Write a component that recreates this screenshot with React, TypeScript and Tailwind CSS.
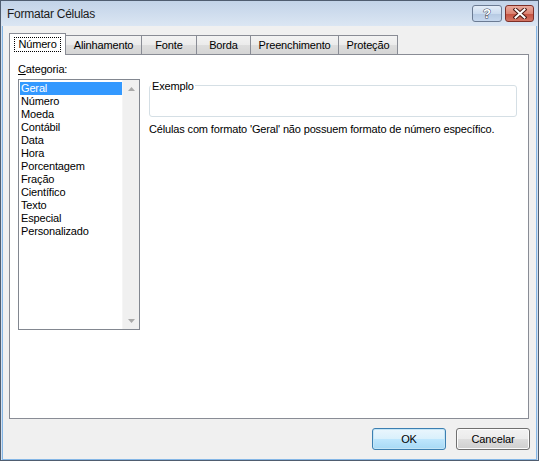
const CATEGORIES = [
  "Geral",
  "Número",
  "Moeda",
  "Contábil",
  "Data",
  "Hora",
  "Porcentagem",
  "Fração",
  "Científico",
  "Texto",
  "Especial",
  "Personalizado",
];

const TABS = [
  { label: "Alinhamento", width: "w-[77px]" },
  { label: "Fonte", width: "w-[56px]" },
  { label: "Borda", width: "w-[55px]" },
  { label: "Preenchimento", width: "w-[89px]" },
  { label: "Proteção", width: "w-[60px]" },
];

function TitleBar() {
  return (
    <div className="flex h-[25px] items-start justify-between bg-[linear-gradient(#c2d3e8,#dbe6f3)] pl-[6px] pr-[4px]">
      <span className="pt-[6px] text-[12px] leading-[14px] tracking-[-0.25px] text-[#1b1b1b]">Formatar Células</span>
      <div className="flex gap-[3px] pt-[4px]">
        <button className="flex h-[17px] w-[30px] items-center justify-center rounded-[3px] border border-[#6b7b93] bg-[linear-gradient(#e4edf8_0%,#ccdcef_50%,#b5c9e2_51%,#c7d8ee_100%)]">
          <svg width="12" height="13" viewBox="0 0 12 13">
            <text
              x="6"
              y="11"
              textAnchor="middle"
              fontFamily="Liberation Sans, sans-serif"
              fontWeight="bold"
              fontSize="13"
              fill="#ffffff"
              stroke="#3f4a5c"
              strokeWidth="1"
              paintOrder="stroke"
            >
              ?
            </text>
          </svg>
        </button>
        <button className="flex h-[17px] w-[29px] items-center justify-center rounded-[3px] border border-[#7e2f27] bg-[linear-gradient(#e9aa9c_0%,#dc8473_50%,#c4503e_51%,#d27565_100%)]">
          <svg width="14" height="11" viewBox="0 0 14 11">
            <path
              d="M2.5 1.5 L11.5 9.5 M11.5 1.5 L2.5 9.5"
              stroke="#4a1a14"
              strokeWidth="4"
              strokeLinecap="square"
            />
            <path
              d="M2.5 1.5 L11.5 9.5 M11.5 1.5 L2.5 9.5"
              stroke="#ffffff"
              strokeWidth="2"
              strokeLinecap="square"
            />
          </svg>
        </button>
      </div>
    </div>
  );
}

function ScrollArrow({ down }: { down?: boolean }) {
  return (
    <svg width="7" height="4" viewBox="0 0 7 4">
      <path d={down ? "M0 0 H7 L3.5 4 Z" : "M0 4 H7 L3.5 0 Z"} fill="#a9a9a9" />
    </svg>
  );
}

function CategoryList() {
  return (
    <div className="flex h-[251px] w-[122px] border border-[#828790] bg-white">
      <ul className="flex-1 pl-[1px] pt-[2px]">
        {CATEGORIES.map((c, i) => (
          <li
            key={c}
            className={
              i === 0
                ? "h-[13px] bg-[#3399ff] pl-[1px] leading-[13px] text-white"
                : "h-[13px] pl-[1px] leading-[13px] text-[#000]"
            }
          >
            {c}
          </li>
        ))}
      </ul>
      <div className="flex w-[17px] flex-col items-center justify-between border-l border-[#f5f5f5] bg-[#f0f0f0] pb-[6px] pt-[7px]">
        <ScrollArrow />
        <ScrollArrow down />
      </div>
    </div>
  );
}

export default function App() {
  return (
    <div className="flex h-[461px] w-[539px] flex-col border border-[#4f5d70] bg-[#d3e0ef] font-['Liberation_Sans',Arial,sans-serif] text-[11px] tracking-[-0.15px]">
      <TitleBar />
      <div className="mx-[1px] flex flex-1 flex-col border-x border-b border-[#84b6e6] bg-[#f0f0f0]">
        <div className="flex h-[28px] items-end pl-[6px]">
          <div className="relative z-10 -mb-px flex h-[22px] w-[57px] items-center justify-center border border-b-0 border-[#898c95] bg-white">
            <span className="border border-dotted border-black px-[3px] leading-[13px]">Número</span>
          </div>
          {TABS.map((t) => (
            <div
              key={t.label}
              className={`flex h-[19px] ${t.width} -ml-px items-center justify-center border border-b-0 border-[#898c95] bg-[linear-gradient(#f3f3f3_0%,#ebebeb_50%,#dddddd_51%,#d5d5d5_100%)] pt-[1px]`}
            >
              {t.label}
            </div>
          ))}
        </div>
        <div className="ml-[6px] mr-[7px] flex h-[365px] gap-[9px] border border-[#898c95] bg-white pl-[8px] pr-[11px] pt-[8px]">
          <div className="flex flex-col gap-[3px]">
            <span className="leading-[13px]">
              <span className="underline">C</span>ategoria:
            </span>
            <CategoryList />
          </div>
          <div className="flex flex-1 flex-col pt-[22px]">
            <div className="relative h-[32px] rounded-[3px] border border-[#d5dfe5]">
              <span className="absolute -top-[6px] left-[1px] bg-white px-[1px] leading-[13px]">Exemplo</span>
            </div>
            <p className="mt-[6px] leading-[13px]">
              Células com formato 'Geral' não possuem formato de número específico.
            </p>
          </div>
        </div>
        <div className="flex justify-end gap-[10px] pr-[6px] pt-[9px]">
          <button className="h-[22px] w-[74px] rounded-[3px] border border-[#3c7fb1] bg-[linear-gradient(#eaf6fd_0%,#d9f0fc_50%,#bee6fd_51%,#a7d9f5_100%)] shadow-[inset_0_0_0_1px_#c4e5f6]">
            OK
          </button>
          <button className="h-[22px] w-[74px] rounded-[3px] border border-[#707070] bg-[linear-gradient(#f2f2f2_0%,#ebebeb_50%,#dddddd_51%,#cfcfcf_100%)] shadow-[inset_0_0_0_1px_#fcfcfc]">
            Cancelar
          </button>
        </div>
      </div>
    </div>
  );
}
